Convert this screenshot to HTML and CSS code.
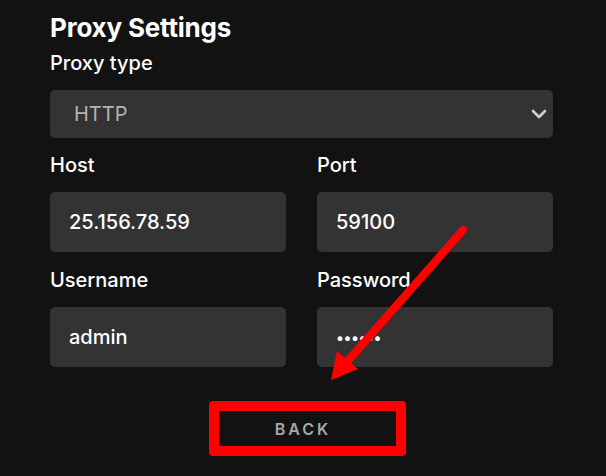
FILE: index.html
```html
<!DOCTYPE html>
<html lang="en">
<head>
<meta charset="utf-8">
<title>Proxy Settings</title>
<link rel="stylesheet" href="styles.css">
</head>
<body>
<div class="panel">
  <h2 class="title">Proxy Settings</h2>
  <div class="field">
    <div class="label">Proxy type</div>
    <div class="control select">
      <span class="select-value">HTTP</span>
      <svg class="chevron" width="16" height="10" viewBox="0 0 16 10"><polyline points="2,2 8,8 14,2" fill="none" stroke="#cfcfcf" stroke-width="2.6" stroke-linecap="round" stroke-linejoin="round"/></svg>
    </div>
  </div>
  <div class="grid">
    <div class="field">
      <div class="label">Host</div>
      <div class="control input">25.156.78.59</div>
    </div>
    <div class="field">
      <div class="label">Port</div>
      <div class="control input">59100</div>
    </div>
    <div class="field">
      <div class="label">Username</div>
      <div class="control input">admin</div>
    </div>
    <div class="field">
      <div class="label">Password</div>
      <div class="control input"><span class="dots">••••••</span></div>
    </div>
  </div>
  <div class="actions">
    <button class="back">BACK<span class="highlight"></span></button>
  </div>
</div>
<svg class="arrow" width="606" height="476" viewBox="0 0 606 476">
  <line x1="463" y1="230" x2="346" y2="363" stroke="#ff0000" stroke-width="8" stroke-linecap="round"/>
  <polygon points="331,380 337,351 358,369" fill="#ff0000"/>
</svg>
</body>
</html>
```
FILE: styles.css
```css
html, body {
  margin: 0;
  padding: 0;
  background: #121212;
}
body {
  width: 606px;
  height: 476px;
  overflow: hidden;
  position: relative;
  font-family: Inter, "Liberation Sans", sans-serif;
  color: #ffffff;
}
.panel {
  padding: 12px 53px 0 50px;
}
.title {
  margin: 0 0 7px;
  font-size: 26px;
  line-height: 32px;
  font-weight: 700;
  letter-spacing: -0.2px;
}
.field {
  display: flex;
  flex-direction: column;
}
.label {
  font-size: 20px;
  line-height: 24px;
  font-weight: 500;
  margin-bottom: 15px;
}
.control {
  background: #333333;
  border-radius: 5px;
  display: flex;
  align-items: center;
  font-size: 20px;
  font-weight: 500;
}
.select {
  height: 48px;
  padding: 0 6px 0 24px;
  justify-content: space-between;
  color: #b3b3b3;
  font-weight: 400;
}
.chevron {
  display: block;
}
.grid {
  margin-top: 15px;
  display: grid;
  grid-template-columns: 236px 236px;
  column-gap: 31px;
  row-gap: 16px;
}
.input {
  height: 60px;
  padding: 0 19px;
  color: #ffffff;
}
.dots {
  font-size: 15px;
  letter-spacing: -0.5px;
}
.actions {
  margin-top: 44px;
  display: flex;
  justify-content: center;
}
.back {
  position: relative;
  width: 160px;
  height: 35px;
  background: transparent;
  border: none;
  color: #a7a7a7;
  font-family: Inter, "Liberation Sans", sans-serif;
  font-size: 16px;
  font-weight: 600;
  letter-spacing: 3px;
  padding: 0 0 0 3px;
}
.highlight {
  position: absolute;
  top: -10px;
  bottom: -10px;
  left: -13px;
  right: -24px;
  border: 10px solid #ff0000;
  border-radius: 4px;
}
.arrow {
  position: absolute;
  left: 0;
  top: 0;
  pointer-events: none;
}
```
